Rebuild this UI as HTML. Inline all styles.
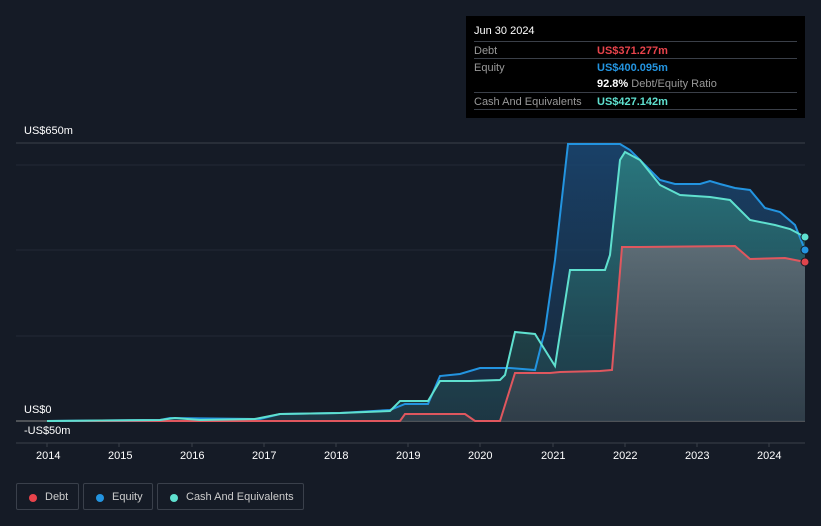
<!DOCTYPE html>
<html><head><meta charset="utf-8"><style>
body{margin:0;width:821px;height:526px;background:#151b26;font-family:"Liberation Sans",sans-serif;overflow:hidden;position:relative}
.t{position:absolute;color:#fff;font-size:11px}
#tip{position:absolute;left:466px;top:16px;width:339px;height:102px;background:#000}
#tip .r{position:absolute;left:8px;right:8px;border-top:1px solid #3a3f48;height:17px}
#tip span{position:absolute;font-size:11px;top:3px}
.leg{position:absolute;top:483px;height:27px;border:1px solid #3a404b;border-radius:2px;color:#ccc;font-size:11px;line-height:27px;box-sizing:border-box}
.leg i{position:absolute;left:12px;top:10px;width:8px;height:8px;border-radius:50%}
</style></head><body>
<svg width="821" height="526" style="position:absolute;left:0;top:0">
<defs>
<linearGradient id="ge" x1="0" y1="0" x2="0" y2="1"><stop offset="0" stop-color="#1a4a78" stop-opacity=".8"/><stop offset="1" stop-color="#1a3550" stop-opacity=".5"/></linearGradient>
<linearGradient id="gc" x1="0" y1="0" x2="0" y2="1"><stop offset="0" stop-color="#2f8a86" stop-opacity=".75"/><stop offset="1" stop-color="#22454c" stop-opacity=".5"/></linearGradient>
<linearGradient id="gd" x1="0" y1="0" x2="0" y2="1"><stop offset="0" stop-color="#6a6f78" stop-opacity=".8"/><stop offset="1" stop-color="#3c424c" stop-opacity=".6"/></linearGradient>
</defs>
<line x1="16" y1="143" x2="805" y2="143" stroke="#3a404a"/>
<line x1="16" y1="165" x2="805" y2="165" stroke="#232a36"/>
<line x1="16" y1="250" x2="805" y2="250" stroke="#232a36"/>
<line x1="16" y1="336" x2="805" y2="336" stroke="#232a36"/>
<line x1="16" y1="421" x2="805" y2="421" stroke="#888" stroke-width="1"/>
<line x1="16" y1="443" x2="805" y2="443" stroke="#3a404a"/>
<g stroke="#3a404a"><line x1="47" y1="443" x2="47" y2="447"/><line x1="119" y1="443" x2="119" y2="447"/><line x1="192" y1="443" x2="192" y2="447"/><line x1="264" y1="443" x2="264" y2="447"/><line x1="336" y1="443" x2="336" y2="447"/><line x1="408" y1="443" x2="408" y2="447"/><line x1="480" y1="443" x2="480" y2="447"/><line x1="553" y1="443" x2="553" y2="447"/><line x1="625" y1="443" x2="625" y2="447"/><line x1="697" y1="443" x2="697" y2="447"/><line x1="769" y1="443" x2="769" y2="447"/></g>
<path d="M47,421 L160,420 170,418 260,419 280,414 340,413 390,410 405,404 428,404 440,376 460,374 480,368 510,368 535,370 545,330 555,260 568,144 620,144 630,150 660,180 675,184 700,184 710,181 720,184 735,188 750,190 765,208 780,212 795,225 805,250 L805,421Z" fill="url(#ge)"/>
<path d="M47,421 L160,420 175,418 200,420 255,419 280,414 340,413 390,411 400,401 428,401 440,381 470,381 500,380 505,375 515,332 535,334 545,350 555,366 570,270 605,270 610,255 620,160 625,152 640,160 660,185 680,195 710,197 730,200 750,220 775,225 790,229 805,237 L805,421Z" fill="url(#gc)"/>
<path d="M47,421 L400,421 405,414 465,414 475,421 500,421 515,373 550,373 560,372 600,371 612,370 622,247 640,247 735,246 750,259 785,258 805,262 L805,421Z" fill="url(#gd)"/>
<path d="M47,421 L400,421 405,414 465,414 475,421 500,421 515,373 550,373 560,372 600,371 612,370 622,247 640,247 735,246 750,259 785,258 805,262" fill="none" stroke="#e0575e" stroke-width="2"/>
<path d="M47,421 L160,420 170,418 260,419 280,414 340,413 390,410 405,404 428,404 440,376 460,374 480,368 510,368 535,370 545,330 555,260 568,144 620,144 630,150 660,180 675,184 700,184 710,181 720,184 735,188 750,190 765,208 780,212 795,225 805,250" fill="none" stroke="#2394e0" stroke-width="2"/>
<path d="M47,421 L160,420 175,418 200,420 255,419 280,414 340,413 390,411 400,401 428,401 440,381 470,381 500,380 505,375 515,332 535,334 545,350 555,366 570,270 605,270 610,255 620,160 625,152 640,160 660,185 680,195 710,197 730,200 750,220 775,225 790,229 805,237" fill="none" stroke="#5fe0cf" stroke-width="2"/>
<circle cx="805" cy="262" r="4" fill="#e0454c" stroke="#151b26"/>
<circle cx="805" cy="250" r="4" fill="#2394e0" stroke="#151b26"/>
<circle cx="805" cy="237" r="4" fill="#5fe0cf" stroke="#151b26"/>
</svg>
<div class="t" style="left:24px;top:125px">US$650m</div>
<div class="t" style="left:24px;top:404px">US$0</div>
<div class="t" style="left:24px;top:425px">-US$50m</div>
<div class="t" style="left:36px;top:450px">2014</div><div class="t" style="left:108px;top:450px">2015</div><div class="t" style="left:180px;top:450px">2016</div><div class="t" style="left:252px;top:450px">2017</div><div class="t" style="left:324px;top:450px">2018</div><div class="t" style="left:396px;top:450px">2019</div><div class="t" style="left:468px;top:450px">2020</div><div class="t" style="left:541px;top:450px">2021</div><div class="t" style="left:613px;top:450px">2022</div><div class="t" style="left:685px;top:450px">2023</div><div class="t" style="left:757px;top:450px">2024</div>
<div id="tip">
<span style="left:8px;top:9px;color:#fff;font-size:11px;position:absolute">Jun 30 2024</span>
<div class="r" style="top:25px"><span style="left:0;color:#999">Debt</span><span style="left:123px;color:#e8434b;font-weight:bold">US$371.277m</span></div>
<div class="r" style="top:42px"><span style="left:0;color:#999">Equity</span><span style="left:123px;color:#2394e0;font-weight:bold">US$400.095m</span></div>
<div class="r" style="top:59px;border-top:none"><span style="left:123px;color:#fff"><b>92.8%</b> <span style="position:static;color:#999">Debt/Equity Ratio</span></span></div>
<div class="r" style="top:76px"><span style="left:0;color:#999">Cash And Equivalents</span><span style="left:123px;color:#5fe0cf;font-weight:bold">US$427.142m</span></div>
<div class="r" style="top:93px;height:0"></div>
</div>
<div class="leg" style="left:16px;width:63px"><i style="background:#e8434b"></i><span style="margin-left:28px">Debt</span></div>
<div class="leg" style="left:83px;width:70px"><i style="background:#2394e0"></i><span style="margin-left:28px">Equity</span></div>
<div class="leg" style="left:157px;width:147px"><i style="background:#5fe0cf"></i><span style="margin-left:28px">Cash And Equivalents</span></div>
</body></html>
